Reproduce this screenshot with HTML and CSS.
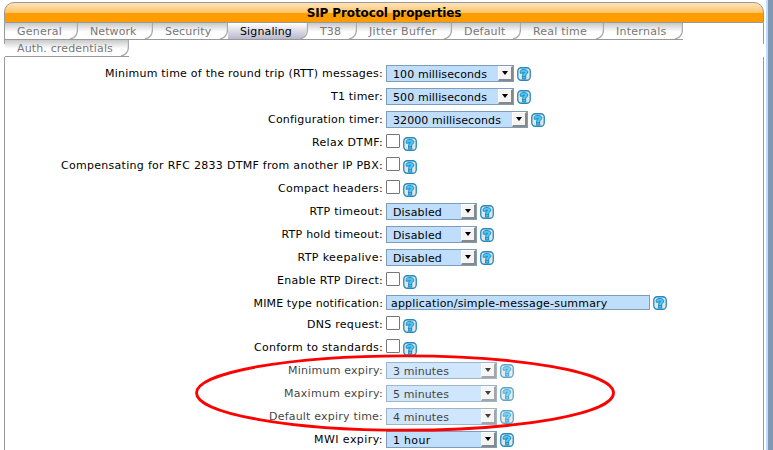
FILE: index.html
```html
<!DOCTYPE html>
<html lang="en">
<head>
<meta charset="utf-8">
<title>SIP Protocol properties</title>
<link rel="stylesheet" href="styles.css">
</head>
<body>
<svg class="defs" aria-hidden="true">
  <symbol id="help" viewBox="0 0 14 14">
    <rect x=".75" y=".75" width="12.5" height="12.5" rx="3.5" fill="#e4e4e4" stroke="#2289bd" stroke-width="1.3"/>
    <path d="M3.2 5.8V4.4C3.2 1.8 10.8 1.8 10.8 4.8C10.8 7 8.7 7.1 8.7 8.8V12H5.6V8.2C5.6 6.4 7.5 6.4 7.5 5.2L6.2 5.1V6.2H3.2Z" fill="#48c9ff" stroke="#087bb3" stroke-width=".8"/>
    <path d="M5.6 9.6H8.7" stroke="#087bb3" stroke-width=".7"/>
  </symbol>
  <symbol id="edge" viewBox="0 0 11 16">
    <path d="M11 0V16H3C7 15 10.5 10 10.5 0" fill="#fff"/>
    <path d="M10.5 0V6C10.5 11 8 15 3 16" fill="none" stroke="#aaa" stroke-width="1.3"/>
  </symbol>
</svg>
<div class="page">
  <main class="panel">
    <h1 class="title">SIP Protocol properties</h1>
    <nav class="tabs" id="tabs"></nav>
    <form class="form" id="form"></form>
  </main>
  <div class="gutter"></div>
</div>
<svg class="annotation" viewBox="0 0 422 78"><ellipse cx="211" cy="39" rx="208.5" ry="37.2" fill="none" stroke="#f00" stroke-width="2.8"/></svg>
<script src="app.js"></script>
</body>
</html>
```
FILE: styles.css
```css
* { box-sizing: border-box; }
body { margin: 0; width: 773px; height: 450px; overflow: hidden; background: #fff; font: 11px/13px "DejaVu Sans", sans-serif; color: #000; }
.defs { display: none; }
.page { display: flex; justify-content: space-between; height: 450px; padding-left: 4px; }
.panel { width: 760px; padding-top: 2px; }
.title { margin: 0; height: 21px; border: 1px solid #999; border-radius: 10px 10px 0 0; background: linear-gradient(#ffe3bb 0, #ffc467 10px, #ff9c00 10px); font-size: 12px; line-height: 20px; text-align: center; letter-spacing: -.11px; }
.tabs { display: flex; flex-wrap: wrap; align-content: flex-start; height: 34px; padding-left: 1px; background: linear-gradient(#999, #999) left top / 1px 21px no-repeat, linear-gradient(#999, #999) right top / 1px 21px no-repeat; }
.tab { display: flex; justify-content: space-between; height: 17px; padding-left: 12px; border-bottom: 1px solid #999; background: linear-gradient(#c8c8c8, #fff 9px); color: #777; line-height: 17px; white-space: nowrap; }
.tab.active { background: linear-gradient(#fff, #b8b8cc); color: #000; }
.edge { width: 11px; height: 16px; flex: none; }
.form { height: 393px; padding-top: 5px; border: 1px solid #999; border-width: 0 1px; }
.row { display: grid; grid-template-columns: 378px 1fr; column-gap: 3px; height: 23px; }
.row.short { height: 21px; }
.label { text-align: right; padding-top: 5px; white-space: nowrap; }
.label span, .select span, .input span, .tab > span { display: inline-block; white-space: nowrap; }
.field { display: flex; align-items: flex-start; gap: 3px; padding-top: 3px; }
.select { display: flex; justify-content: space-between; height: 17px; padding-left: 6px; border: 1px solid #7f9db9; background: #bfdefc; line-height: 17px; }
.arrow { display: flex; justify-content: center; align-items: center; width: 15px; height: 15px; background: #f4f4f4; border: 1px solid #fff; border-right: 2px solid #888; border-bottom: 2px solid #888; }
.arrow::before { content: ""; border: 3px solid transparent; border-top: 4px solid #000; border-bottom: 0; }
.input { width: 264px; height: 15px; padding-left: 4px; border: 1px solid #7f9db9; background: #bfdefc; line-height: 15px; }
.check { width: 14px; height: 14px; border: 1px solid #777; border-radius: 1px; background: #fff; }
.help { width: 14px; height: 14px; margin-top: 2px; }
.check + .help { margin-top: 3px; }
.input + .help { margin-top: 1px; }
.disabled { opacity: .75; }
.gutter { width: 7px; border-left: 2px solid #bfdefc; background: #8098b4; }
.annotation { position: absolute; left: 194px; top: 354px; width: 422px; height: 78px; }
```
FILE: app.js
```js
// [name, tab width, text width]
const tabs = [["General", 73, 45], ["Network", 75, 46.5], ["Security", 75, 46.5], ["Signaling", 80, 52], ["T38", 49, 21], ["Jitter Buffer", 95, 67.5], ["Default", 69, 41.5], ["Real time", 83, 54], ["Internals", 79, 50.5], ["Auth. credentials", 124, 96]];
// [label, label width, control, value, value width, control width, state]
const rows = [
  ["Minimum time of the round trip (RTT) messages:", 278, "select", "100 milliseconds", 94, 128],
  ["T1 timer:", 52, "select", "500 milliseconds", 94, 128],
  ["Configuration timer:", 115, "select", "32000 milliseconds", 108, 142],
  ["Relax DTMF:", 71, "check"],
  ["Compensating for RFC 2833 DTMF from another IP PBX:", 322, "check"],
  ["Compact headers:", 105, "check"],
  ["RTP timeout:", 73.5, "select", "Disabled", 49, 91],
  ["RTP hold timeout:", 101.5, "select", "Disabled", 49, 91],
  ["RTP keepalive:", 85.5, "select", "Disabled", 49, 91],
  ["Enable RTP Direct:", 106, "check"],
  ["MIME type notification:", 129.5, "input", "application/simple-message-summary", 216.5, 264],
  ["DNS request:", 76, "check"],
  ["Conform to standards:", 129, "check"],
  ["Minimum expiry:", 95, "select", "3 minutes", 56, 111, "disabled"],
  ["Maximum expiry:", 99, "select", "5 minutes", 56, 111, "disabled"],
  ["Default expiry time:", 114, "select", "4 minutes", 56, 111, "disabled"],
  ["MWI expiry:", 69, "select", "1 hour", 37.5, 111]
];
const text = (value, width) => `<span data-width="${width}">${value}</span>`;
document.getElementById("tabs").innerHTML = tabs.map(([name, width, textWidth]) =>
  `<div class="tab${name === "Signaling" ? " active" : ""}" style="width:${width}px">${text(name, textWidth)}<svg class="edge"><use href="#edge"/></svg></div>`).join("");
document.getElementById("form").innerHTML = rows.map(([label, labelWidth, type, value, valueWidth, width, state = ""]) => {
  const control = type === "check" ? '<div class="check"></div>'
    : `<div class="${type}" style="width:${width}px">${text(value, valueWidth)}${type === "select" ? '<i class="arrow"></i>' : ""}</div>`;
  return `<div class="row ${type === "input" ? "short" : ""} ${state}"><div class="label">${text(label, labelWidth)}</div><div class="field">${control}<svg class="help"><use href="#help"/></svg></div></div>`;
}).join("");
document.querySelectorAll("[data-width]").forEach(el => {
  const extra = Number(el.dataset.width) - el.getBoundingClientRect().width;
  el.style.letterSpacing = `${extra / el.textContent.length}px`;
});
```
